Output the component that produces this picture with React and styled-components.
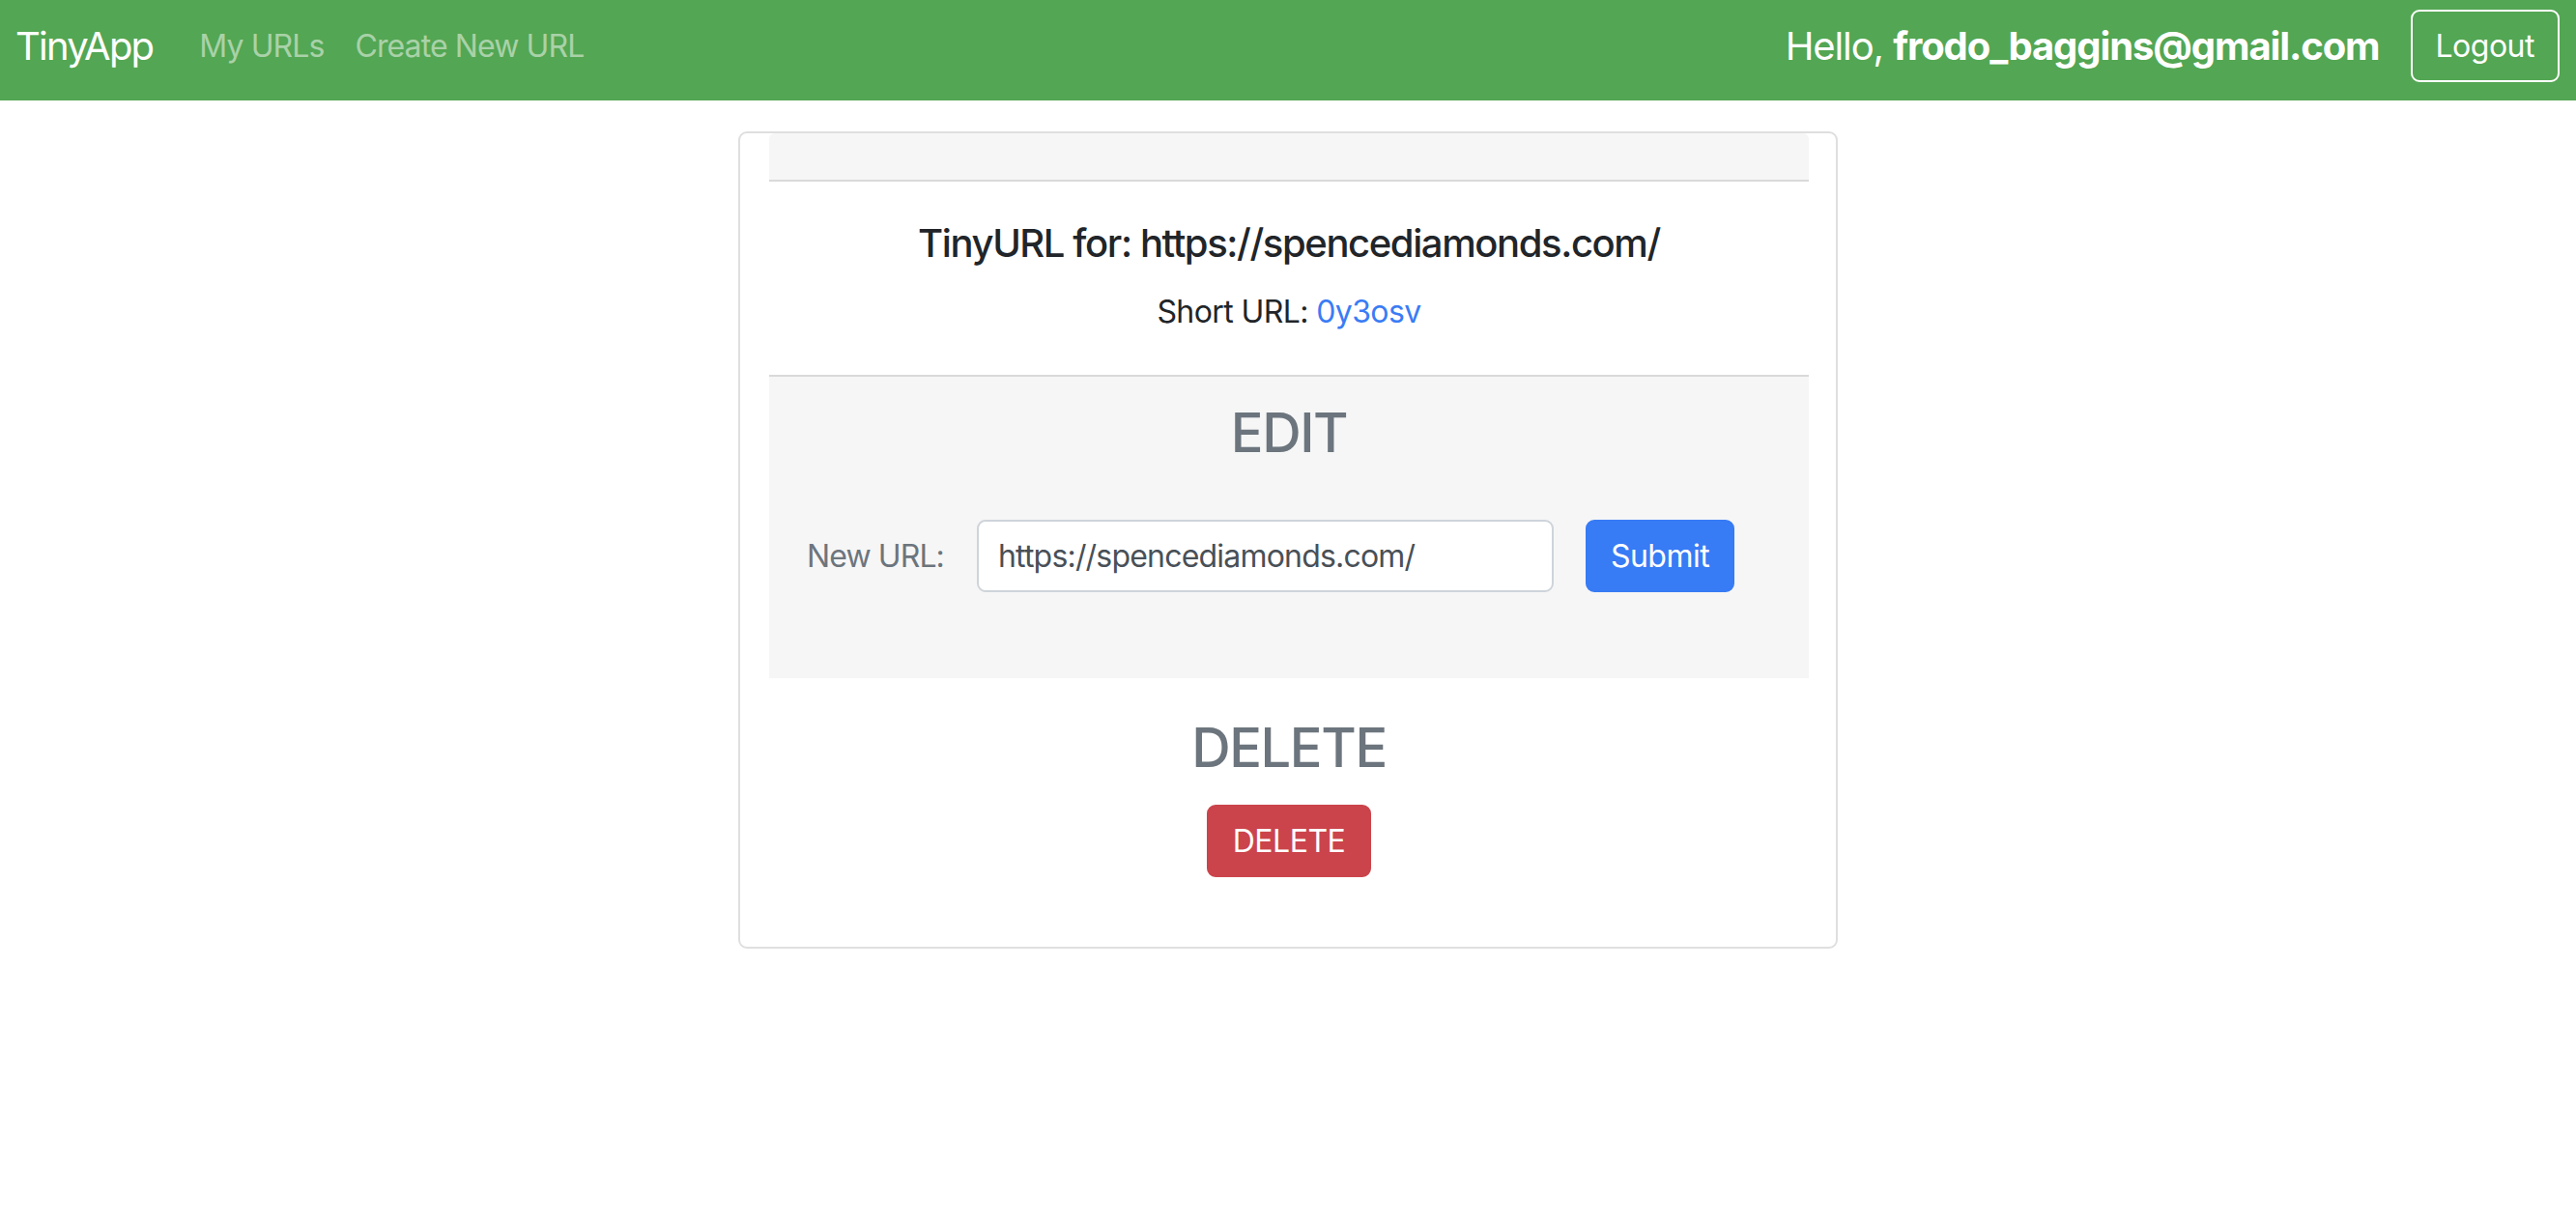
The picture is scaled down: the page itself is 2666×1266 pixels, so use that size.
import React from "react";
import styled, { createGlobalStyle } from "styled-components";

const GlobalStyle = createGlobalStyle`
  html, body {
    margin: 0;
    padding: 0;
    background: #ffffff;
    font-family: Inter, "Liberation Sans", sans-serif;
    color: #212529;
  }
  * { box-sizing: border-box; }
`;

export default function App() {
  return (
    <>
      <GlobalStyle />
      <Navbar>
        <NavLeft>
          <Brand>TinyApp</Brand>
          <NavLink>My URLs</NavLink>
          <NavLink>Create New URL</NavLink>
        </NavLeft>
        <NavRight>
          <Greeting>
            Hello, <strong>frodo_baggins@gmail.com</strong>
          </Greeting>
          <OutlineButton>Logout</OutlineButton>
        </NavRight>
      </Navbar>

      <Card>
        <CardHeader />
        <TitleSection>
          <Title>TinyURL for: https://spencediamonds.com/</Title>
          <ShortUrl>
            Short URL: <ShortLink>0y3osv</ShortLink>
          </ShortUrl>
        </TitleSection>

        <EditSection>
          <SectionHeading $spacing="56px">EDIT</SectionHeading>
          <EditForm onSubmit={(e) => e.preventDefault()}>
            <Label>New URL:</Label>
            <UrlInput type="text" defaultValue="https://spencediamonds.com/" />
            <Button $variant="primary" type="submit">Submit</Button>
          </EditForm>
        </EditSection>

        <DeleteSection>
          <SectionHeading $spacing="25px">DELETE</SectionHeading>
          <Button $variant="danger" $pad="25px">DELETE</Button>
        </DeleteSection>
      </Card>
    </>
  );
}

// styling of components
const Navbar = styled.nav`
  height: 104px;
  background-color: #53a653;
  display: flex;
  align-items: center;
  justify-content: space-between;
  padding: 10px 17px 19px 16px;
`;

const NavLeft = styled.div`
  display: flex;
  align-items: center;
`;

const Brand = styled.a`
  font-size: 40px;
  line-height: 60px;
  color: #ffffff;
  margin-right: 32px;
  letter-spacing: -1.8px;
`;

const NavLink = styled.a`
  font-size: 32px;
  line-height: 48px;
  padding: 0 16px;
  color: rgba(255, 255, 255, 0.5);
  letter-spacing: -0.9px;
  cursor: pointer;
`;

const NavRight = styled.div`
  display: flex;
  align-items: center;
  gap: 32px;
`;

const Greeting = styled.span`
  font-size: 40px;
  color: #ffffff;
  letter-spacing: -1.1px;
  strong {
    font-weight: 700;
  }
`;

const OutlineButton = styled.button`
  height: 75px;
  padding: 0 24px;
  font-family: inherit;
  font-size: 32px;
  color: #ffffff;
  background: transparent;
  border: 2px solid #ffffff;
  border-radius: 9px;
  letter-spacing: -0.5px;
  cursor: pointer;
`;

const Card = styled.div`
  width: 1138px;
  margin: 32px auto 0;
  border: 2px solid #dfdfdf;
  border-radius: 9px;
  padding: 0 28px 0 30px;
`;

const CardHeader = styled.div`
  height: 50px;
  background: #f6f6f6;
  border-bottom: 2px solid #dadada;
  border-radius: 6px 6px 0 0;
`;

const TitleSection = styled.div`
  padding: 40px 0 41px;
  text-align: center;
`;

const Title = styled.h5`
  margin: 0 0 23px;
  font-size: 40px;
  line-height: 48px;
  font-weight: 500;
  color: #212529;
  letter-spacing: -1.4px;
`;

const ShortUrl = styled.p`
  margin: 0;
  font-size: 32px;
  line-height: 48px;
  color: #212529;
  letter-spacing: -0.6px;
`;

const ShortLink = styled.a`
  color: #3a7cf5;
  cursor: pointer;
`;

const EditSection = styled.div`
  background: #f6f6f6;
  border-top: 2px solid #d9d9d9;
  padding: 25px 0 89px;
  text-align: center;
`;

const DeleteSection = styled.div`
  padding: 39px 0 72px;
  display: flex;
  flex-direction: column;
  align-items: center;
`;

const SectionHeading = styled.h3`
  margin: 0 0 ${(p) => p.$spacing};
  font-size: 56px;
  line-height: 67px;
  font-weight: 500;
  color: #6c757d;
  letter-spacing: -1.4px;
`;

const EditForm = styled.form`
  display: flex;
  align-items: center;
  padding-left: 39px;
`;

const Label = styled.label`
  font-size: 32px;
  color: #6c757d;
  margin-right: 34px;
  letter-spacing: -0.9px;
`;

const UrlInput = styled.input`
  width: 597px;
  height: 75px;
  padding: 0 20px;
  font-family: inherit;
  font-size: 32px;
  color: #495057;
  background: #ffffff;
  border: 2px solid #ced4da;
  border-radius: 9px;
  margin-right: 33px;
  letter-spacing: -0.8px;
  outline: none;
`;

const Button = styled.button`
  height: 75px;
  padding: 0 ${(p) => p.$pad || "24px"};
  font-family: inherit;
  font-size: 32px;
  color: #ffffff;
  background: ${(p) => (p.$variant === "danger" ? "#cb444b" : "#377bf5")};
  border: 2px solid ${(p) => (p.$variant === "danger" ? "#cb444b" : "#377bf5")};
  border-radius: 9px;
  letter-spacing: -0.5px;
  cursor: pointer;
`;
